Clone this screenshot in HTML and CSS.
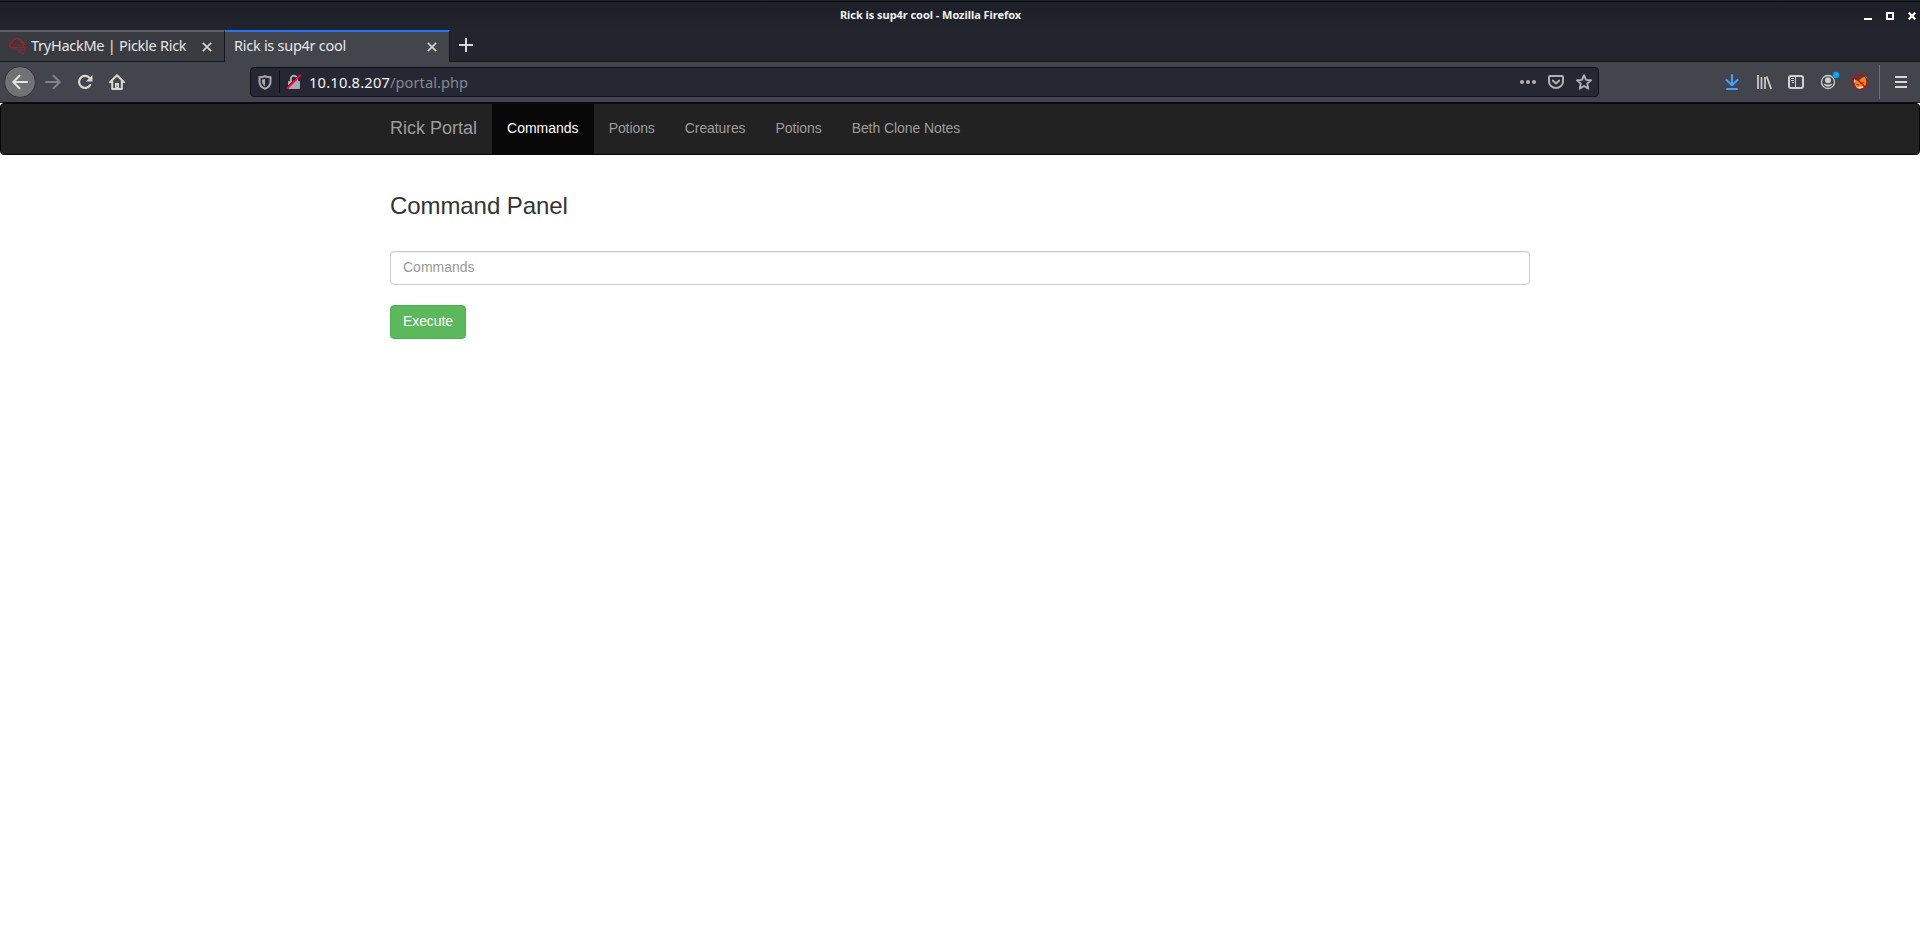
FILE: index.html
```html
<!DOCTYPE html>
<html lang="en">
<head>
    <meta charset="UTF-8">
    <title>Rick is sup4r cool</title>
    <link rel="stylesheet" href="styles.css">
</head>
<body>
    <div class="browser">
        <div class="titlebar">
            <div class="title">Rick is sup4r cool - Mozilla Firefox</div>
            <div class="window-buttons">
                <svg width="8" height="8" viewBox="0 0 8 8"><path d="M0 6h8v2H0z" fill="#fff"/></svg>
                <svg width="8" height="8" viewBox="0 0 8 8"><path d="M1 1h6v6H1z" fill="none" stroke="#fff" stroke-width="2"/></svg>
                <svg width="8" height="8" viewBox="0 0 8 8"><path d="M.7.7l6.6 6.6M7.3.7L.7 7.3" stroke="#fff" stroke-width="2.2"/></svg>
            </div>
        </div>

        <div class="tabs">
            <div class="tab">
                <svg class="favicon" width="17" height="17" viewBox="0 0 17 17" fill="none" stroke="#b3191d" stroke-width="1.3">
                    <path d="M9 9.500H3C1.500 9.500.7 8.500.7 7.200S1.500 4.500 3.500 4.200C4 2 5.800.7 8 .7s4 1.200 4.500 3.300c1.700.1 3 1.200 3 3"/>
                    <path d="M9 7.500h2m1.500 0H15M10 9.500h6M8 12h1.500m1 0H16M9.500 14h2M12 15.500h3" stroke="#96222a"/>
                </svg>
                <span class="tab-label">TryHackMe | Pickle Rick</span>
                <svg class="close" width="10" height="10" viewBox="0 0 10 10"><path d="M.8.8l8.400 8.400M9.200.8L.8 9.200" stroke="#d4d4d2" stroke-width="1.7"/></svg>
            </div>
            <div class="tab active">
                <span class="tab-label">Rick is sup4r cool</span>
                <svg class="close" width="10" height="10" viewBox="0 0 10 10"><path d="M.8.8l8.400 8.400M9.200.8L.8 9.200" stroke="#d4d4d2" stroke-width="1.7"/></svg>
            </div>
            <svg class="new-tab" width="14" height="14" viewBox="0 0 14 14"><path d="M7 0v14M0 7h14" stroke="#d9d9d7" stroke-width="2"/></svg>
        </div>

        <div class="toolbar">
            <div class="nav-buttons">
                <div class="back">
                    <svg width="16" height="16" viewBox="0 0 16 16"><path d="M15 8H1.500M7.500 1.800L1.300 8l6.200 6.200" fill="none" stroke="#e4e4e2" stroke-width="2" stroke-linecap="round" stroke-linejoin="round"/></svg>
                </div>
                <svg width="16" height="16" viewBox="0 0 16 16"><path d="M1 8h13.500M8.500 1.800L14.700 8l-6.200 6.200" fill="none" stroke="#818286" stroke-width="2" stroke-linecap="round" stroke-linejoin="round"/></svg>
                <svg width="16" height="16" viewBox="0 0 16 16"><path d="M12.800 4.200A6 6 0 1 0 13.200 11" fill="none" stroke="#d7d7d5" stroke-width="2.2" stroke-linecap="round"/><path d="M15.500 1v6.500H9z" fill="#d7d7d5"/></svg>
                <svg width="16" height="16" viewBox="0 0 16 16"><path d="M1 8.300L8 1.300l7 7M3.200 7v8h9.600V7" fill="none" stroke="#d7d7d5" stroke-width="2" stroke-linecap="round" stroke-linejoin="round"/><path d="M6 9h4v6H6z" fill="#d7d7d5"/><path d="M7.500 11.500h1V13h-1z" fill="#42454c"/></svg>
            </div>

            <div class="urlbar">
                <svg width="14" height="15" viewBox="0 0 14 15"><path d="M7 1.200c2 .8 3.600 1 5.500 1v4.300c0 3.300-1.800 5.900-5.500 7.300-3.700-1.400-5.500-4-5.500-7.300V2.200c1.900 0 3.500-.2 5.500-1z" fill="none" stroke="#a9aab0" stroke-width="2"/><path d="M7 4v7.200C4.800 10 4 8.400 4 6.500V4.400z" fill="#a9aab0"/></svg>
                <span class="divider"></span>
                <svg width="16" height="16" viewBox="0 0 16 16"><path d="M4.800 7.500V5a3.200 3.200 0 0 1 6.400 0v2.500" fill="none" stroke="#a9aab0" stroke-width="2"/><rect x="2" y="7" width="12" height="8" rx="1" fill="#a9aab0"/><path d="M.5 13.500L13 1" stroke="#252733" stroke-width="1"/><path d="M1.500 14L14 1.500" stroke="#f3063d" stroke-width="2" stroke-linecap="round"/></svg>
                <span class="url"><b>10.10.8.207</b>/portal.php</span>
                <div class="url-actions">
                    <svg width="16" height="16" viewBox="0 0 16 16" fill="#b0b1b3"><circle cx="2" cy="8" r="2"/><circle cx="8" cy="8" r="2"/><circle cx="14" cy="8" r="2"/></svg>
                    <svg width="16" height="16" viewBox="0 0 16 16" fill="none" stroke="#b0b1b3" stroke-width="2" stroke-linecap="round" stroke-linejoin="round"><path d="M2 2h12a1 1 0 0 1 1 1v4.500a7 6.500 0 0 1-14 0V3a1 1 0 0 1 1-1z"/><path d="M4.800 6.500L8 9.500l3.200-3"/></svg>
                    <svg width="16" height="16" viewBox="0 0 16 16" fill="none" stroke="#b0b1b3" stroke-width="1.9" stroke-linejoin="round"><path d="M8 1.200l2 4.700 5 .4-3.800 3.300 1.200 5L8 12l-4.400 2.600 1.200-5L1 6.300l5-.4z"/></svg>
                </div>
            </div>

            <div class="tools">
                <svg width="16" height="16" viewBox="0 0 16 16"><path d="M8 1v10M2.500 6L8 11.300 13.500 6M3 15h10" fill="none" stroke="#45a1ff" stroke-width="2" stroke-linecap="round" stroke-linejoin="round"/></svg>
                <svg width="16" height="16" viewBox="0 0 16 16"><path d="M2 1v14M5.500 3v12M9 3v12M10.700 2.500L15.200 15" fill="none" stroke="#cfcfcd" stroke-width="1.7"/></svg>
                <svg width="16" height="16" viewBox="0 0 16 16"><rect x="1" y="2" width="14" height="12" rx="2" fill="none" stroke="#cfcfcd" stroke-width="2"/><path d="M7.500 2v12M3 4.500h3M3 6.500h3M4 8.500h2" stroke="#cfcfcd" stroke-width="1"/></svg>
                <div class="account">
                    <svg width="16" height="16" viewBox="0 0 16 16"><circle cx="8" cy="8" r="6.500" fill="none" stroke="#cfcfcd" stroke-width="1.3"/><circle cx="8" cy="6.300" r="3" fill="#cfcfcd"/><path d="M3.600 10c1.200-.5 1.800 0 2.400.4h4c.6-.4 1.200-.9 2.400-.4a5 5 0 0 1-8.800 0z" fill="#cfcfcd"/></svg>
                    <span class="dot"></span>
                </div>
                <svg width="16" height="16" viewBox="0 0 16 16"><path d="M2 5l4 2 4-3 3-2 1.500 5-1 5-3.500 2.500H5L3 11z" fill="#ef8708"/><path d="M12 2l2.300 1 .4 3zM1.500 5.500l2 1.500-1.500 2zM4 12.500l3 .5 4-1 .5 1.500L9 15H6z" fill="#ddd"/><path d="M4.500 10.500l2.500.5m2.500-1.500l2-1" stroke="#713611"/><circle cx="8" cy="8" r="7.300" fill="none" stroke="#c4090b" stroke-width="1.3"/><path d="M2.800 2.800l10.400 10.400" stroke="#c4090b" stroke-width="1.5"/></svg>
                <span class="separator"></span>
                <svg width="12" height="12" viewBox="0 0 12 12"><path d="M0 1h12M0 6h12M0 11h12" stroke="#d7d7d5" stroke-width="2"/></svg>
            </div>
        </div>
    </div>

    <nav class="navbar">
        <div class="container">
            <a class="navbar-brand">Rick Portal</a>
            <ul class="navbar-nav">
                <li class="active"><a>Commands</a></li>
                <li><a>Potions</a></li>
                <li><a>Creatures</a></li>
                <li><a>Potions</a></li>
                <li><a>Beth Clone Notes</a></li>
            </ul>
        </div>
    </nav>

    <div class="container">
        <form class="panel">
            <h3>Command Panel</h3>
            <input type="text" class="form-control" name="command" placeholder="Commands">
            <button type="button" class="btn">Execute</button>
        </form>
    </div>
</body>
</html>
```

FILE: styles.css
```css
* {
    box-sizing: border-box;
}
body {
    margin: 0;
    font-family: "Liberation Sans", Arial, sans-serif;
    font-size: 14px;
    line-height: 20px;
    color: #333;
    background-color: #fff;
}
svg {
    display: block;
    flex-shrink: 0;
}

/* browser window */
.browser {
    height: 103px;
    font-family: "Noto Sans", sans-serif;
    background-color: #23252e;
    border-top: 1px solid #21232b;
    border-bottom: 1px solid #0c0d12;
}
.titlebar {
    display: flex;
    align-items: center;
    height: 29px;
    padding-right: 4px;
    border-top: 1px solid #090a0d;
    background: linear-gradient(#1d1f27, #23252e);
}
.title {
    flex: 1;
    padding: 0 3px 2px 0;
    text-align: center;
    font-size: 11px;
    font-weight: bold;
    line-height: 24px;
    letter-spacing: -0.05px;
    color: #f1f1f1;
}
.window-buttons {
    display: flex;
    gap: 14px;
}
.tabs {
    display: flex;
    height: 32px;
    border-bottom: 1px solid #14161c;
}
.tab {
    display: flex;
    align-items: center;
    width: 225px;
    height: 31px;
    padding: 0 12px 0 9px;
    background-color: #393b41;
    border-top: 2px solid #5d5e66;
    border-right: 1px solid #14161c;
}
.tab.active {
    height: 32px;
    padding-bottom: 1px;
    background-color: #42454c;
    border-top-color: #2376f3;
}
.favicon {
    margin-right: 5px;
}
.tab-label {
    flex: 1;
    padding-bottom: 3px;
    font-size: 14.5px;
    letter-spacing: -0.27px;
    white-space: nowrap;
    color: #e7e7e5;
}
.close {
    margin-top: 1px;
}
.new-tab {
    margin: 8px 0 0 9px;
}
.toolbar {
    display: flex;
    align-items: center;
    height: 40px;
    background-color: #42454c;
}
.nav-buttons {
    display: flex;
    align-items: center;
    gap: 16px;
    width: 250px;
    padding-left: 4px;
}
.back {
    display: flex;
    align-items: center;
    justify-content: center;
    width: 32px;
    height: 32px;
    margin-right: -7px;
    border: 1px solid #303238;
    border-radius: 50%;
    background-color: #717276;
}
.urlbar {
    display: flex;
    align-items: center;
    width: 1349px;
    height: 30px;
    padding: 0 6px 0 7px;
    border: 1px solid #111219;
    border-radius: 4px;
    background-color: #252733;
}
.divider {
    width: 1px;
    height: 22px;
    margin: 0 6px 0 7px;
    background-color: #0d0e13;
}
.url {
    flex: 1;
    margin-left: 7px;
    font-size: 14.67px;
    letter-spacing: 0.03px;
    color: #86878c;
}
.url b {
    font-weight: normal;
    letter-spacing: 0.2px;
    color: #f5f5f5;
}
.url-actions {
    display: flex;
    gap: 12px;
}
.tools {
    display: flex;
    align-items: center;
    gap: 16px;
    margin-left: auto;
    padding-right: 13px;
}
.account {
    position: relative;
}
.dot {
    position: absolute;
    top: -2px;
    right: -3px;
    width: 6px;
    height: 6px;
    border-radius: 50%;
    background-color: #00a8f8;
    box-shadow: 0 0 1px #00a8f8;
}
.separator {
    width: 1px;
    height: 34px;
    margin: 0 -1px 0 -5px;
    background-color: #6d6e72;
}

/* portal page */
.container {
    width: 1170px;
    margin: 0 auto;
    padding: 0 15px;
}
.navbar {
    height: 52px;
    margin-bottom: 20px;
    border: 1px solid #080808;
    border-radius: 4px;
    background-color: #222;
}
.navbar .container {
    display: flex;
    padding: 0;
}
.navbar-brand {
    height: 50px;
    padding: 14px 15px;
    font-size: 18px;
    color: #9d9d9d;
}
.navbar-nav {
    display: flex;
    margin: 0;
    padding: 0;
    list-style: none;
}
.navbar-nav a {
    display: block;
    height: 50px;
    padding: 14px 15px;
    letter-spacing: -0.08px;
    color: #9d9d9d;
}
.navbar-nav .active a {
    letter-spacing: 0;
    color: #fff;
    background-color: #080808;
}
.panel {
    display: flex;
    flex-direction: column;
    align-items: flex-start;
    padding-top: 18px;
}
h3 {
    margin: 0 0 32px;
    font-size: 24px;
    font-weight: 500;
    line-height: 26px;
    letter-spacing: -0.08px;
}
.form-control {
    width: 100%;
    height: 34px;
    margin-bottom: 20px;
    padding: 5px 12px 7px;
    font: inherit;
    border: 1px solid #ccc;
    border-radius: 4px;
    box-shadow: inset 0 1px 1px rgba(0, 0, 0, 0.075);
}
.form-control::placeholder {
    color: #999;
}
.btn {
    height: 34px;
    padding: 5px 12px 7px;
    font: inherit;
    letter-spacing: -0.1px;
    color: #fff;
    background-color: #5cb85c;
    border: 1px solid #4cae4c;
    border-radius: 4px;
}
```
